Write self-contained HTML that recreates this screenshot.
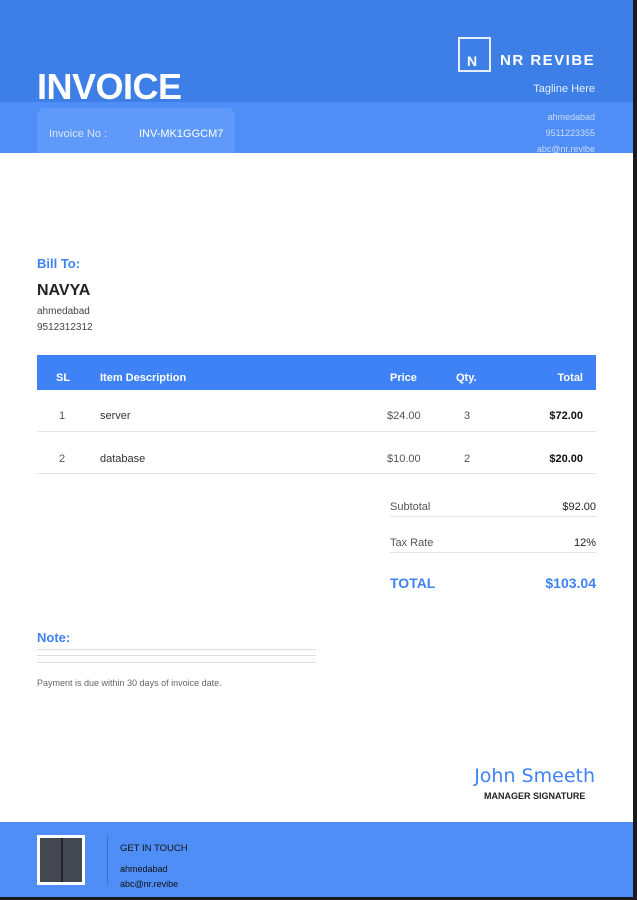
<!DOCTYPE html><html><head><style>
body{margin:0;width:637px;height:900px;position:relative;background:#1b1b1b;font-family:"Liberation Sans",sans-serif;overflow:hidden}
.pg{position:absolute;left:0;top:0;width:633px;height:897px;background:#fff;overflow:hidden}
.a{position:absolute}
.r{text-align:right}
</style></head><body><div class="pg">
<div class="a" style="left:0;top:0;width:633px;height:102px;background:#3d7fe6"></div>
<div class="a" style="left:0;top:102px;width:633px;height:51px;background:#4f8ef7"></div>
<div class="a" style="left:37px;top:108px;width:198px;height:45px;background:#5f99f9;border-radius:8px 8px 0 0"></div>
<div class="a" style="left:37px;top:66px;color:#fff;font-weight:bold;font-size:36px;letter-spacing:-0.5px">INVOICE</div>
<div class="a" style="left:49px;top:128px;color:#dbe7fd;font-size:11px">Invoice No :</div>
<div class="a" style="left:139px;top:128px;color:#fff;font-size:11px">INV-MK1GGCM7</div>
<div class="a" style="left:458px;top:37px;width:29px;height:31px;border:2px solid #e6eefc"></div>
<div class="a" style="left:467px;top:53px;color:#fff;font-weight:bold;font-size:14px">N</div>
<div class="a" style="left:500px;top:52px;color:#fff;font-weight:bold;font-size:15px;letter-spacing:1.5px">NR REVIBE</div>
<div class="a r" style="right:38px;top:83px;color:#e5eefd;font-size:11px">Tagline Here</div>
<div class="a r" style="right:38px;top:109px;color:#c9dcfb;font-size:9px;line-height:16px">ahmedabad<br>9511223355<br>abc@nr.revibe</div>
<div class="a" style="left:37px;top:256px;color:#3f82f5;font-weight:bold;font-size:13px">Bill To:</div>
<div class="a" style="left:37px;top:282px;color:#222;font-weight:bold;font-size:16px">NAVYA</div>
<div class="a" style="left:37px;top:304px;color:#444;font-size:10px;line-height:16px">ahmedabad<br>9512312312</div>
<div class="a" style="left:37px;top:355px;width:559px;height:35px;background:#3f82f5"></div>
<div class="a" style="left:56px;top:372px;color:#fff;font-weight:bold;font-size:11px">SL</div>
<div class="a" style="left:100px;top:372px;color:#fff;font-weight:bold;font-size:11px">Item Description</div>
<div class="a" style="left:390px;top:372px;color:#fff;font-weight:bold;font-size:11px">Price</div>
<div class="a" style="left:456px;top:372px;color:#fff;font-weight:bold;font-size:11px">Qty.</div>
<div class="a r" style="right:50px;top:372px;color:#fff;font-weight:bold;font-size:11px">Total</div>
<div class="a" style="left:37px;top:431px;width:559px;height:1px;background:#e4e4e4"></div>
<div class="a" style="left:37px;top:473px;width:559px;height:1px;background:#e4e4e4"></div>
<div class="a" style="left:59px;top:410px;color:#555;font-size:11px">1</div>
<div class="a" style="left:100px;top:410px;color:#333;font-size:11px">server</div>
<div class="a" style="left:387px;top:410px;color:#555;font-size:11px">$24.00</div>
<div class="a" style="left:464px;top:410px;color:#555;font-size:11px">3</div>
<div class="a r" style="right:50px;top:410px;color:#111;font-weight:bold;font-size:11px">$72.00</div>
<div class="a" style="left:59px;top:453px;color:#555;font-size:11px">2</div>
<div class="a" style="left:100px;top:453px;color:#333;font-size:11px">database</div>
<div class="a" style="left:387px;top:453px;color:#555;font-size:11px">$10.00</div>
<div class="a" style="left:464px;top:453px;color:#555;font-size:11px">2</div>
<div class="a r" style="right:50px;top:453px;color:#111;font-weight:bold;font-size:11px">$20.00</div>
<div class="a" style="left:390px;top:501px;color:#555;font-size:11px">Subtotal</div>
<div class="a r" style="right:37px;top:501px;color:#222;font-size:11px">$92.00</div>
<div class="a" style="left:390px;top:516px;width:206px;height:1px;background:#e4e4e4"></div>
<div class="a" style="left:390px;top:537px;color:#555;font-size:11px">Tax Rate</div>
<div class="a r" style="right:37px;top:537px;color:#222;font-size:11px">12%</div>
<div class="a" style="left:390px;top:552px;width:206px;height:1px;background:#e4e4e4"></div>
<div class="a" style="left:390px;top:575px;color:#3f82f5;font-weight:bold;font-size:14px">TOTAL</div>
<div class="a r" style="right:37px;top:575px;color:#3f82f5;font-weight:bold;font-size:14px">$103.04</div>
<div class="a" style="left:37px;top:630px;color:#3f82f5;font-weight:bold;font-size:13px">Note:</div>
<div class="a" style="left:37px;top:649px;width:279px;height:1px;background:#ddd"></div>
<div class="a" style="left:37px;top:655px;width:279px;height:1px;background:#ddd"></div>
<div class="a" style="left:37px;top:662px;width:279px;height:1px;background:#ddd"></div>
<div class="a" style="left:37px;top:678px;color:#666;font-size:9px">Payment is due within 30 days of invoice date.</div>
<div class="a r" style="right:38px;top:765px;color:#3f82f5;font-size:19px;font-family:'DejaVu Sans',cursive">John Smeeth</div>
<div class="a" style="left:484px;top:791px;color:#222;font-weight:bold;font-size:9px">MANAGER SIGNATURE</div>
<div class="a" style="left:0;top:822px;width:633px;height:75px;background:#4f8ef7"></div>
<div class="a" style="left:37px;top:835px;width:42px;height:44px;background:#434752;border:3px solid #fff"></div>
<div class="a" style="left:61px;top:838px;width:2px;height:44px;background:#222"></div>
<div class="a" style="left:107px;top:835px;width:1px;height:50px;background:#3a6fd0"></div>
<div class="a" style="left:120px;top:843px;color:#111;font-size:9.5px">GET IN TOUCH</div>
<div class="a" style="left:120px;top:862px;color:#111;font-size:9px;line-height:15px">ahmedabad<br>abc@nr.revibe</div>
</div></body></html>
